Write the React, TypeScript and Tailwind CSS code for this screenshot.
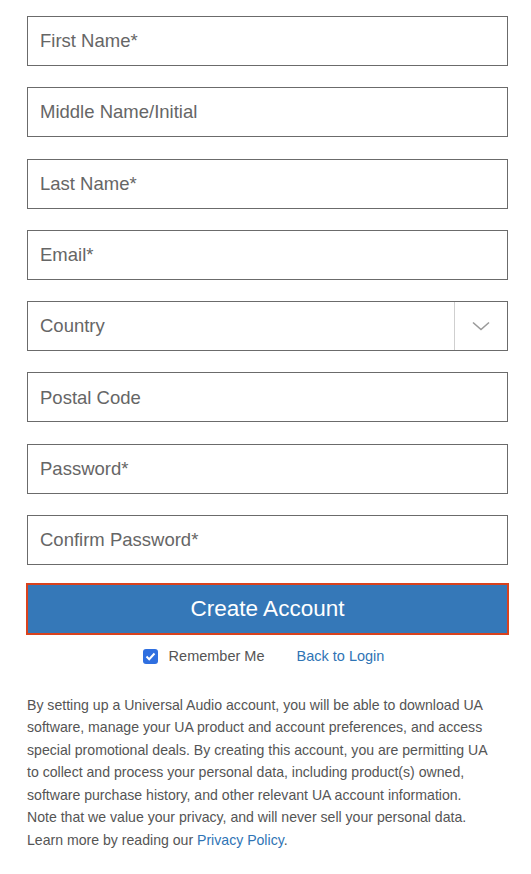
import React from "react";

const fields = [
  "First Name*",
  "Middle Name/Initial",
  "Last Name*",
  "Email*",
  "Country",
  "Postal Code",
  "Password*",
  "Confirm Password*",
];

export default function App() {
  return (
    <div className="min-h-screen bg-white font-['Liberation_Sans',Arial,sans-serif]">
      <div className="w-[481px] ml-[27px] pt-4 flex flex-col">
        <div className="flex flex-col gap-[21.3px]">
          {fields.map((f) =>
            f === "Country" ? (
              <div key={f} className="h-[50px] border border-[#6b6b6b] flex">
                <div className="flex-1 flex items-center pl-[12px] text-[18.5px] text-[#666]">{f}</div>
                <div className="w-[53px] border-l border-[#cfcfcf] flex items-center justify-center">
                  <svg width="18" height="10" viewBox="0 0 18 10" fill="none">
                    <path d="M1 1.5 L9 8.5 L17 1.5" stroke="#9a9a9a" strokeWidth="1.6" />
                  </svg>
                </div>
              </div>
            ) : (
              <div key={f} className="h-[50px] border border-[#6b6b6b] flex items-center pl-[12px] text-[18.5px] text-[#666]">
                {f}
              </div>
            )
          )}
        </div>
        <button className="mt-[18px] -mx-px h-[52px] border-2 border-[#d9421d] bg-[#3578b8] text-white text-[22.5px] flex items-center justify-center">
          Create Account
        </button>
        <div className="mt-[11px] flex items-center justify-center text-[14.5px] pr-[8px]">
          <span className="w-[15px] h-[15px] rounded-[3px] bg-[#2f6fe0] flex items-center justify-center mr-[11px]">
            <svg width="11" height="9" viewBox="0 0 11 9" fill="none">
              <path d="M1.5 4.5 L4.2 7.2 L9.5 1.5" stroke="white" strokeWidth="2" />
            </svg>
          </span>
          <span className="text-[#555]">Remember Me</span>
          <span className="ml-[32px] text-[#2f74b5]">Back to Login</span>
        </div>
        <p className="mt-[26px] w-[500px] text-[14.1px] leading-[22.5px] text-[#555]">
          By setting up a Universal Audio account, you will be able to download UA
          <br />
          software, manage your UA product and account preferences, and access
          <br />
          special promotional deals. By creating this account, you are permitting UA
          <br />
          to collect and process your personal data, including product(s) owned,
          <br />
          software purchase history, and other relevant UA account information.
          <br />
          Note that we value your privacy, and will never sell your personal data.
          <br />
          Learn more by reading our <span className="text-[#2f74b5]">Privacy Policy</span>.
        </p>
      </div>
    </div>
  );
}
